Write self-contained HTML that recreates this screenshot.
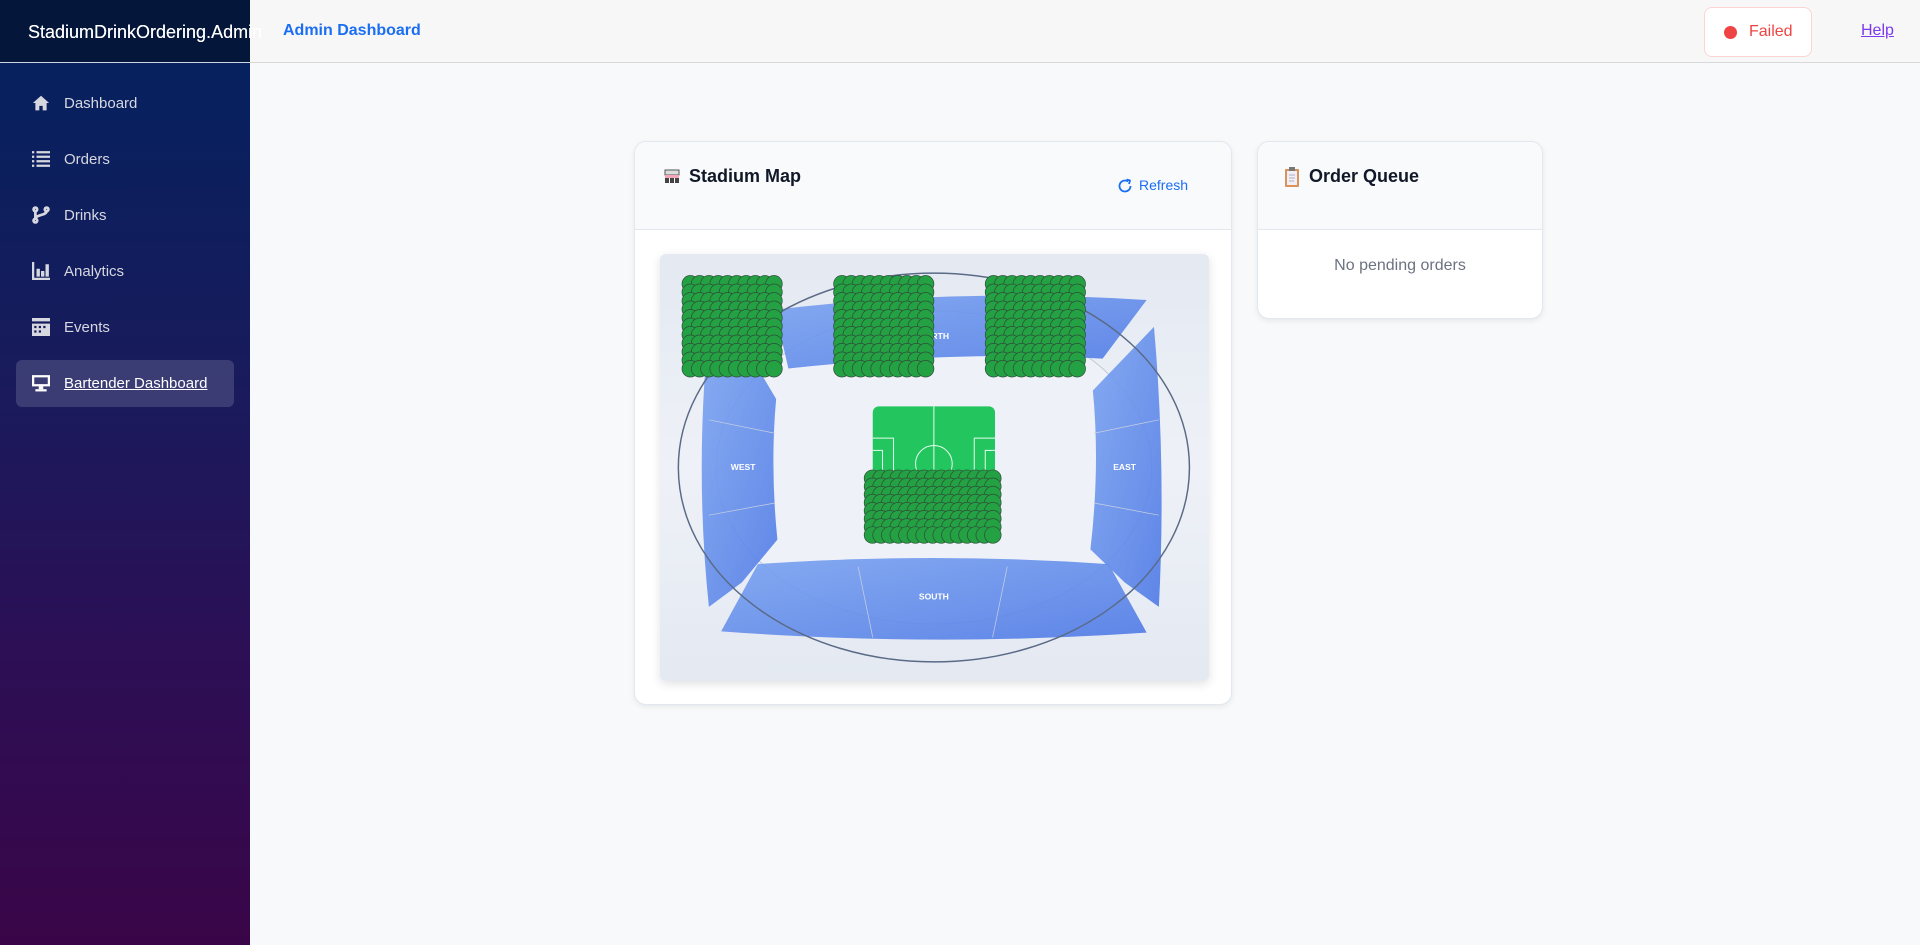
<!DOCTYPE html>
<html><head><meta charset="utf-8"><style>
*{box-sizing:border-box;margin:0;padding:0}
body{width:1920px;height:945px;overflow:hidden;background:#f8f9fb;font-family:"Liberation Sans",sans-serif;position:relative}
.side{position:absolute;left:0;top:0;width:250px;height:945px;background:linear-gradient(180deg,#06215e 63px,#1a1a5c 400px,#2c0f55 650px,#3a0548 945px)}
.brand{position:absolute;left:0;top:0;width:250px;height:63px;background:#04163a;border-bottom:1px solid #d0d6e6}
.brand span{position:absolute;left:28px;top:22px;color:#fff;font-size:18px;white-space:nowrap;z-index:5}
.nav{position:absolute;left:16px;width:218px;height:47px;color:#d7d7e0;font-size:15px;display:flex;align-items:center}
.nav svg{position:absolute;left:16px;top:14px}
.nav span{position:absolute;left:48px}
.active{background:rgba(255,255,255,.15);border-radius:6px;color:#fff}
.active span{text-decoration:underline}
.top{position:absolute;left:250px;top:0;right:0;height:63px;background:#f7f7f7;border-bottom:1px solid #d8d8d8}
.card{position:absolute;background:#fff;border:1px solid #e2e8f0;border-radius:12px;box-shadow:0 2px 6px rgba(0,0,0,.07);overflow:hidden}
.ch{position:absolute;left:0;top:0;right:0;background:#f8fafc;border-bottom:1px solid #e2e8f0}
.ttl{position:absolute;font-size:18px;font-weight:bold;color:#111827}
</style></head><body>
<div class="side">
<div class="brand"><span>StadiumDrinkOrdering.Admin</span></div>
<div class="nav" style="top:80px"><svg width="18" height="18" viewBox="0 0 16 16"><path d="M8 1.5 0.8 8H3v6.5h3.5v-4h3v4H13V8h2.2z" fill="#d7d7e0"/></svg><span>Dashboard</span></div>
<div class="nav" style="top:136px"><svg width="18" height="18" viewBox="0 0 16 16" fill="#d7d7e0"><rect x="0" y="1" width="2" height="2"/><rect x="4" y="1" width="12" height="2"/><rect x="0" y="5" width="2" height="2"/><rect x="4" y="5" width="12" height="2"/><rect x="0" y="9" width="2" height="2"/><rect x="4" y="9" width="12" height="2"/><rect x="0" y="13" width="2" height="2"/><rect x="4" y="13" width="12" height="2"/></svg><span>Orders</span></div>
<div class="nav" style="top:192px"><svg width="18" height="18" viewBox="0 0 16 16" fill="none" stroke="#d7d7e0" stroke-width="2.4"><circle cx="3" cy="3" r="1.6"/><circle cx="13" cy="3" r="1.6"/><circle cx="3" cy="13" r="1.6"/><path d="M3 4.5v7M13 4.5c0 4-10 3-10 7"/></svg><span>Drinks</span></div>
<div class="nav" style="top:248px"><svg width="18" height="18" viewBox="0 0 16 16" fill="#d7d7e0"><path d="M0 0h2v14h14v2H0z"/><rect x="4" y="6" width="3" height="7"/><rect x="8" y="8" width="3" height="5"/><rect x="12" y="2" width="3" height="11"/></svg><span>Analytics</span></div>
<div class="nav" style="top:304px"><svg width="18" height="18" viewBox="0 0 16 16" fill="#d7d7e0"><rect x="0" y="0" width="16" height="3"/><path d="M0 5h16v11H0z M2 7v2h2V7z M6 7v2h2V7z M10 7v2h2V7z M2 11v2h2v-2z M6 11v2h2v-2z" fill-rule="evenodd"/></svg><span>Events</span></div>
<div class="nav active" style="top:360px"><svg width="18" height="18" viewBox="0 0 16 16" fill="#fff"><path d="M0 1h16v10H0z M2 3v6h12V3z" fill-rule="evenodd"/><rect x="6" y="11" width="4" height="2.5"/><rect x="3" y="13.5" width="10" height="2"/></svg><span>Bartender Dashboard</span></div>
</div>
<div class="top">
<div style="position:absolute;left:33px;top:22px;color:#1b6ef3;font-weight:bold;font-size:16px">Admin Dashboard</div>
<div style="position:absolute;left:1454px;top:7px;width:108px;height:50px;background:#fff;border:1px solid #fcd4d4;border-radius:8px"></div>
<div style="position:absolute;left:1474px;top:26px;width:13px;height:13px;border-radius:50%;background:#ef4444"></div>
<div style="position:absolute;left:1499px;top:23px;color:#ef4444;font-size:16px">Failed</div>
<div style="position:absolute;left:1611px;top:22px;color:#7c3aed;font-size:16px;text-decoration:underline">Help</div>
</div>
<div class="brand" style="background:transparent;border:none;z-index:4"><span>StadiumDrinkOrdering.Admin</span></div>

<div class="card" style="left:634px;top:141px;width:598px;height:564px">
<div class="ch" style="height:88px"></div>
<svg style="position:absolute;left:28px;top:25px" width="18" height="18" viewBox="0 0 18 18"><rect x="2" y="3" width="14" height="5" fill="#ddd" stroke="#555" stroke-width="1"/><rect x="2" y="8" width="14" height="3" fill="#f4a7b9"/><rect x="2" y="11" width="4" height="5" fill="#444"/><rect x="7" y="11" width="4" height="5" fill="#444"/><rect x="12" y="11" width="4" height="5" fill="#444"/></svg>
<div class="ttl" style="left:54px;top:24px">Stadium Map</div>
<svg style="position:absolute;left:482px;top:36px" width="16" height="16" viewBox="0 0 16 16" fill="none" stroke="#1b6ef3" stroke-width="1.8"><path d="M13.5 8A5.5 5.5 0 1 1 11 3.4"/><path d="M9.5 1.5 13 2.5 12 6" stroke-linejoin="round"/></svg>
<div style="position:absolute;left:504px;top:35px;color:#1b6ef3;font-size:14px">Refresh</div>
<div style="position:absolute;left:25px;top:112px;width:549px;height:427px;background:linear-gradient(180deg,#e4e9f2,#eef1f7 50%,#e4e9f2);border-radius:6px;box-shadow:0 3px 10px rgba(0,0,0,.12)">
<svg id="m" width="549" height="427" viewBox="538 207 449 348">
<defs><linearGradient id="bl" x1="0" y1="0" x2="1" y2="1"><stop offset="0" stop-color="#7aa2f0"/><stop offset="1" stop-color="#4f7ae6"/></linearGradient></defs>
<ellipse cx="762" cy="381" rx="178" ry="128" fill="#eef2f8" stroke="#b4bfd0" stroke-width=".6"/>
<path d="M632 252 Q780 234 936 244 L900 292 Q780 285 643 300 Z" fill="url(#bl)" opacity=".9"/>
<path d="M575 300 L620 303 L633 325 Q628 380 634 440 L605 475 L578 495 Q568 400 575 300Z" fill="url(#bl)" opacity=".9"/>
<path d="M942 266 L892 318 Q898 380 890 448 L918 475 L946 495 Q952 380 942 266Z" fill="url(#bl)" opacity=".9"/>
<path d="M618 460 Q762 450 905 460 L936 516 Q762 528 588 515Z" fill="url(#bl)" opacity=".9"/>
<g stroke="#c8d0e0" stroke-width=".6" fill="none"><path d="M578 342 L632 353M578 420 L632 410M946 342 L893 353M946 420 L893 410M700 462 L712 520M822 462 L810 520"/></g>
<g fill="#fff" font-size="7" font-weight="bold" text-anchor="middle" font-family="Liberation Sans"><text x="762" y="276">NORTH</text><text x="606" y="383">WEST</text><text x="918" y="383">EAST</text><text x="762" y="489">SOUTH</text></g>
<ellipse cx="762" cy="381" rx="209" ry="159" fill="none" stroke="#5a6a86" stroke-width="1.2"/>
<rect x="712" y="331" width="100" height="70" rx="5" fill="#22c55e"/>
<g stroke="#e8fff0" stroke-width=".8" fill="none"><path d="M762 331V400M712 357h17v40M812 357h-17v40M712 367h8v30M812 367h-8v30"/><circle cx="762" cy="378" r="15"/></g>
<g id="seats" fill="#23a143" stroke="#2f4f3a" stroke-width=".6"></g>
</svg></div>
</div>

<div class="card" style="left:1257px;top:141px;width:286px;height:178px">
<div class="ch" style="height:88px"></div>
<svg style="position:absolute;left:27px;top:25px" width="14" height="20" viewBox="0 0 14 20"><rect x="0" y="2" width="14" height="18" rx="1" fill="#d9935a"/><rect x="2" y="4" width="10" height="14" fill="#f1eef6"/><rect x="4" y="0" width="6" height="4" fill="#777"/><path d="M4 8h6M4 11h6M4 14h5" stroke="#99a" stroke-width=".8"/></svg>
<div class="ttl" style="left:51px;top:24px">Order Queue</div>
<div style="position:absolute;left:0;right:0;top:115px;text-align:center;color:#6b7280;font-size:16px">No pending orders</div>
</div>
<script>
var g=document.getElementById('seats'),s='';
function blk(x0,y0,w,h,c,r){var rr=6.8;for(var j=0;j<r;j++)for(var i=0;i<c;i++){var x=x0+rr+i*(w-2*rr)/(c-1),y=y0+rr+j*(h-2*rr)/(r-1);s+='<circle cx="'+x.toFixed(1)+'" cy="'+y.toFixed(1)+'" r="'+rr+'"/>';}}
blk(556,224,82,83,10,11);blk(680,224,82,83,10,11);blk(804,224,82,83,10,11);blk(705,383,112,60,15,8);
g.innerHTML=s;
</script>
</body></html>
